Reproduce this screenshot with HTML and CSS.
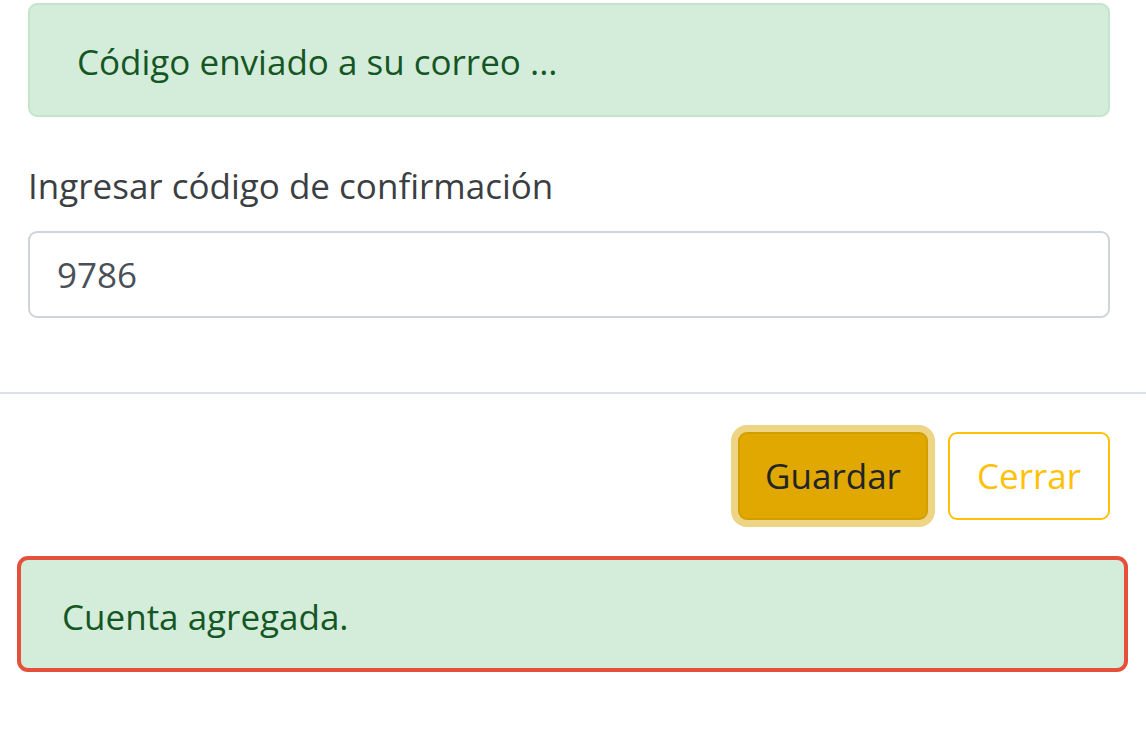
FILE: index.html
```html
<!DOCTYPE html>
<html lang="es">
<head>
<meta charset="utf-8">
<link rel="stylesheet" href="styles.css">
</head>
<body>
<div class="modal">
  <div class="modal-body">
    <div class="alert">Código enviado a su correo ...</div>
    <div class="form-group">
      <label class="label" for="code">Ingresar código de confirmación</label>
      <input class="input" id="code" type="text" value="9786">
    </div>
  </div>
  <div class="modal-footer">
    <button class="btn btn-warning">Guardar</button>
    <button class="btn btn-outline">Cerrar</button>
  </div>
</div>
<div class="result">
  <div class="alert alert-marked">Cuenta agregada.</div>
</div>
</body>
</html>
```

FILE: styles.css
```css
* { box-sizing: border-box; }
html, body {
  margin: 0;
  padding: 0;
  background: #ffffff;
  width: 1146px;
  height: 729px;
  overflow: hidden;
}
body {
  font-family: "Open Sans", "Noto Sans", sans-serif;
  font-size: 35px;
  line-height: 54px;
  color: #212529;
}
.modal-body {
  padding: 3px 36px 74px 28px;
}
.alert {
  background: #d4edda;
  border: 2px solid #c3e6cb;
  border-radius: 9px;
  color: #155724;
  padding: 30px 45px 26px 47px;
  margin-bottom: 42px;
}
.form-group {
  display: flex;
  flex-direction: column;
}
.label {
  color: #3b3f43;
  margin-bottom: 18px;
}
.input {
  height: 87px;
  border: 2px solid #ced4da;
  border-radius: 9px;
  padding: 0 27px;
  font: inherit;
  color: #495057;
  background: #fff;
  outline: none;
}
.modal-footer {
  border-top: 2px solid #dee2e6;
  display: flex;
  justify-content: flex-end;
  gap: 20px;
  padding: 38px 36px 36px 0;
}
.btn {
  font: inherit;
  height: 88px;
  padding: 0 27px;
  border-radius: 9px;
  border: 2px solid transparent;
  background: #fff;
}
.btn-warning {
  padding: 0 25px;
  background: #e0a800;
  border-color: #d39e00;
  color: #212529;
  box-shadow: 0 0 0 7px rgba(222, 170, 12, 0.5);
}
.btn-outline {
  color: #ffc107;
  border-color: #ffc107;
}
.result {
  padding: 0 18px 0 17px;
}
.alert-marked {
  border: 4px solid #e4503c;
  border-radius: 11px;
  padding: 30px 41px 22px;
  margin: 0;
  height: 116px;
}
```
